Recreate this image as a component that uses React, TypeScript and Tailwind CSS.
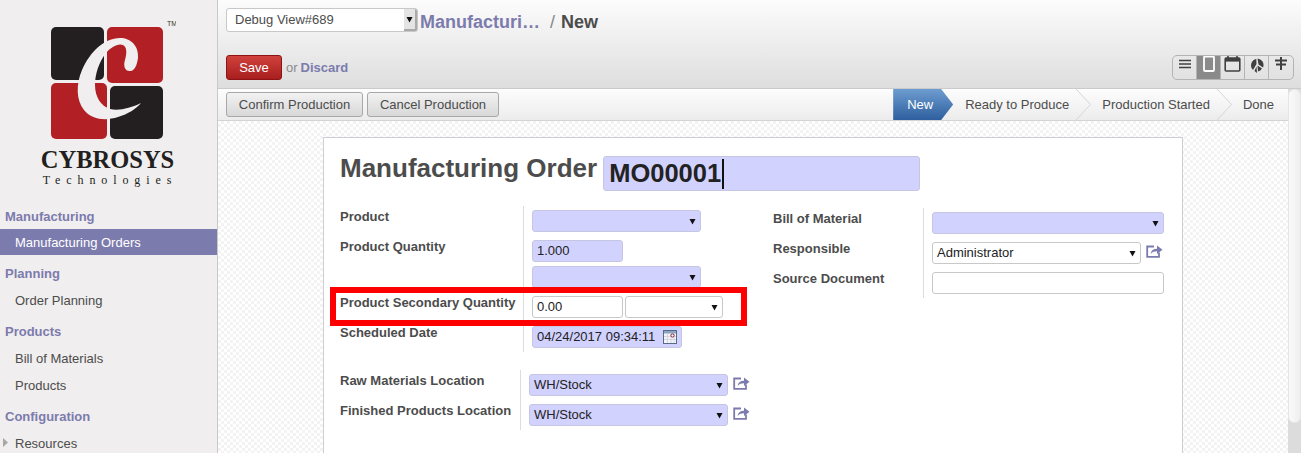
import React from "react";

const Tri = ({ className = "" }: { className?: string }) => (
  <svg width="7" height="7" viewBox="0 0 7 7" className={className}>
    <path d="M0.5 1H6.5L3.5 6.5Z" fill="#111" />
  </svg>
);

const Share = () => (
  <svg width="17" height="14" viewBox="0 0 17 14" className="shrink-0">
    <path d="M8 2.5H1.2V12.8H13V8.5" fill="none" stroke="#7c7bad" strokeWidth="1.8" />
    <path d="M4.5 10C5 6.5 7.5 4.8 11 4.8V1.5L16.5 5.8L11 10V7.3C8.5 7.3 6.2 8 4.5 10Z" fill="#7c7bad" />
  </svg>
);

const CalIcon = () => (
  <svg width="14" height="14" viewBox="0 0 14 14" className="shrink-0">
    <rect x="0.5" y="0.5" width="13" height="13" fill="#f4f4fa" stroke="#5a6a8a" />
    <rect x="1" y="1" width="12" height="2.5" fill="#8fa3c4" />
    <path d="M1 6.5H13M1 9.5H13M4.5 4V13M8 4V13M11 4V13" stroke="#c9d0dc" strokeWidth="0.8" />
    <circle cx="9.5" cy="5.5" r="1.6" fill="#fff" stroke="#8a1f2b" strokeWidth="1" />
  </svg>
);

const Field = ({
  w,
  req,
  select,
  text,
  children,
}: {
  w: string;
  req?: boolean;
  select?: boolean;
  text?: string;
  children?: React.ReactNode;
}) => (
  <div
    className={`${w} flex h-[22px] items-center justify-between rounded-[3px] border pl-[4px] pr-[4px] text-[13px] text-[#222] ${
      req ? "border-[#c6c6e2] bg-[#d2d2ff]" : "border-[#c8c8c8] bg-white"
    }`}
  >
    <span>{text}</span>
    {select && <Tri />}
    {children}
  </div>
);

const Label = ({ children, w }: { children?: React.ReactNode; w: string }) => (
  <div className={`${w} shrink-0 pt-[3px] text-[13px] font-bold leading-[15px] text-[#4c4c4c]`}>{children}</div>
);

const Row = ({
  label,
  labelW,
  h = "h-[30px]",
  children,
}: {
  label?: string;
  labelW: string;
  h?: string;
  children: React.ReactNode;
}) => (
  <div className={`flex ${h}`}>
    <Label w={labelW}>{label}</Label>
    <div className="flex flex-1 gap-[2px] border-l border-[#dcdcdc] pl-[8px] pt-[4px]">{children}</div>
  </div>
);

const Header = ({ children }: { children: React.ReactNode }) => (
  <div className="flex h-[25px] items-center pl-[5px] text-[13px] font-bold text-[#7c7bad]">{children}</div>
);

const Item = ({ children, active }: { children: React.ReactNode; active?: boolean }) => (
  <div
    className={`flex items-center pl-[15px] text-[13px] ${
      active ? "h-[26px] bg-[#7c7bad] pt-[1px] text-white" : "h-[27px] pt-[2px] text-[#4c4c4c]"
    }`}
  >
    {children}
  </div>
);

const Chevron = () => (
  <svg width="15" height="31" viewBox="0 0 15 31" className="shrink-0">
    <path d="M0 0L14.5 15.5L0 31" fill="none" stroke="#d4d4d4" strokeWidth="1" />
  </svg>
);

const Logo = () => (
  <svg width="125" height="120" viewBox="51 20 125 120" className="block">
    <rect x="51" y="27" width="53" height="53" rx="5" fill="#231f20" />
    <rect x="107" y="27" width="56" height="56" rx="5" fill="#b22025" />
    <rect x="51" y="83" width="56" height="56" rx="5" fill="#b22025" />
    <rect x="110" y="86" width="53" height="53" rx="5" fill="#231f20" />
    <path
      d="M138 58C139 46 131 38 120 38C104 38 90 52 82 70C76 84 76 100 84 110C92 120 106 121 118 117C128 114 136 109 141 103C131 108 119 111 110 109C101 106 95 97 95 85C95 74 99 62 106 53C111 47 118 43 123 45C127 47 127 53 125 60C123 66 125 72 131 71C135 70 137 65 138 58Z"
      fill="#f0eeee"
    />
    <text x="167" y="26" fontSize="7" fill="#333" fontFamily="Liberation Sans">
      TM
    </text>
  </svg>
);

const ViewBtn = ({ children, active, last }: { children: React.ReactNode; active?: boolean; last?: boolean }) => (
  <div
    className={`flex w-[24px] items-start justify-center ${last ? "" : "border-r border-[#b4b4b4]"} ${
      active ? "bg-[#8a8a8a]" : ""
    }`}
  >
    {children}
  </div>
);

export default function App() {
  return (
    <div className="flex h-[453px] w-full overflow-hidden bg-white font-['Liberation_Sans',sans-serif]">
      {/* Sidebar */}
      <aside className="w-[218px] shrink-0 border-r border-[#c8c8c8] bg-[#f0eeee]">
        <div className="h-[204px]">
          <div className="pl-[51px] pt-[20px]">
            <Logo />
          </div>
          <div className="mt-[7px] pr-[2px] text-center font-['Liberation_Serif',serif] text-[24.5px] font-bold leading-[26px] text-[#231f20]">
            CYBROSYS
          </div>
          <div className="mt-[1px] pl-[5px] pr-[2px] text-center font-['Liberation_Serif',serif] text-[12px] leading-[13px] tracking-[5.9px] text-[#231f20]">
            Technologies
          </div>
        </div>
        <Header>Manufacturing</Header>
        <Item active>Manufacturing Orders</Item>
        <div className="mt-[6px]">
          <Header>Planning</Header>
          <Item>Order Planning</Item>
        </div>
        <div className="mt-[6px]">
          <Header>Products</Header>
          <Item>Bill of Materials</Item>
          <Item>Products</Item>
        </div>
        <div className="mt-[6px]">
          <Header>Configuration</Header>
          <div className="relative">
            <Item>Resources</Item>
            <svg width="5" height="9" viewBox="0 0 5 9" className="absolute left-[3px] top-[9px]">
              <path d="M0 0L5 4.5L0 9Z" fill="#a8a8a8" />
            </svg>
          </div>
        </div>
      </aside>

      {/* Main */}
      <div className="flex min-w-0 flex-1 flex-col">
        <header className="h-[89px] shrink-0 border-b border-[#cacaca] bg-gradient-to-b from-[#fcfcfc] to-[#dedede] pl-[8px] pr-[7px] pt-[8px]">
          <div className="flex h-[24px] items-center">
            <div className="flex h-[24px] w-[192px] items-center justify-between overflow-hidden rounded-[3px] border border-[#c8c8c8] bg-white pl-[8px] text-[13px] text-[#4c4c4c]">
              <span>Debug View#689</span>
              <div className="flex h-full w-[13px] items-center justify-center border-b-2 border-r-2 border-[#aaa] bg-[#e4e4e4]">
                <Tri />
              </div>
            </div>
            <span className="ml-[2px] translate-y-[2px] text-[18px] font-bold text-[#7c7bad]">Manufacturi…</span>
            <span className="ml-[10px] translate-y-[2px] text-[18px] text-[#888]">/</span>
            <span className="ml-[6px] translate-y-[2px] text-[18px] font-bold text-[#4c4c4c]">New</span>
          </div>
          <div className="mt-[23px] flex items-center justify-between">
            <div className="flex items-center text-[13px]">
              <button className="h-[25px] w-[56px] rounded-[3px] border border-[#8c1414] bg-gradient-to-b from-[#d0413c] to-[#a81e1e] text-[13px] text-white">
                Save
              </button>
              <span className="ml-[4px] text-[#8a8a8a]">or</span>
              <span className="ml-[3px] font-bold text-[#7c7bad]">Discard</span>
            </div>
            <div className="flex h-[25px] w-[122px] overflow-hidden rounded-[5px] border border-[#b4b4b4]">
              <ViewBtn>
                <svg width="14" height="18" viewBox="0 0 14 18">
                  <path d="M1 4.5H13M1 8H13M1 11.5H13" stroke="#404040" strokeWidth="1.7" />
                </svg>
              </ViewBtn>
              <ViewBtn active>
                <svg width="14" height="20" viewBox="0 0 14 20">
                  <rect x="2" y="0.5" width="10" height="14.5" rx="1" fill="#8a8a8a" stroke="#fff" strokeWidth="1.8" />
                </svg>
              </ViewBtn>
              <ViewBtn>
                <svg width="17" height="20" viewBox="0 0 17 20">
                  <rect x="1.2" y="2" width="14.6" height="13" rx="1" fill="none" stroke="#404040" strokeWidth="1.6" />
                  <rect x="1" y="2" width="15" height="3.6" fill="#404040" />
                  <path d="M4 0V2.5M13 0V2.5" stroke="#404040" strokeWidth="1.6" />
                </svg>
              </ViewBtn>
              <ViewBtn>
                <svg width="16" height="20" viewBox="0 0 16 20">
                  <path d="M8.5 2.5A6.5 6.5 0 0 1 14 11.5L9.5 8.5Z" fill="#404040" />
                  <path d="M7.3 3A6.5 6.5 0 0 0 4 14L7.5 8Z" fill="#404040" />
                  <path d="M8.5 9.5L13 12.5A6.5 6.5 0 0 1 9 15.5Z" fill="#404040" />
                  <path d="M5.5 15L7.5 10.5L8 17Z" fill="#404040" />
                </svg>
              </ViewBtn>
              <ViewBtn last>
                <svg width="14" height="20" viewBox="0 0 14 20">
                  <path d="M7 1V14" stroke="#404040" strokeWidth="2" />
                  <path d="M1 4.5H13M2 8.5H12" stroke="#404040" strokeWidth="2.2" />
                </svg>
              </ViewBtn>
            </div>
          </div>
        </header>

        <div className="flex min-h-0 flex-1">
          <div className="flex min-w-0 flex-1 flex-col">
            {/* Status bar */}
            <div className="flex h-[32px] shrink-0 items-start justify-between border-b border-[#d4d4d4] bg-gradient-to-b from-[#fdfdfd] to-[#ececec] pl-[8px]">
              <div className="flex gap-[4px] pt-[3px]">
                <button className="h-[25px] w-[137px] rounded-[3px] border border-[#a8a8a8] bg-gradient-to-b from-[#f2f2f2] to-[#d8d8d8] text-[13px] text-[#4c4c4c]">
                  Confirm Production
                </button>
                <button className="h-[25px] w-[132px] rounded-[3px] border border-[#a8a8a8] bg-gradient-to-b from-[#f2f2f2] to-[#d8d8d8] text-[13px] text-[#4c4c4c]">
                  Cancel Production
                </button>
              </div>
              <div className="flex h-[31px] items-center text-[13px] text-[#4c4c4c]">
                <div className="flex h-[31px] w-[60px] items-center bg-gradient-to-b from-[#6d9dd0] to-[#2f5f9e] pl-[14px] text-white [clip-path:polygon(0_0,80%_0,100%_50%,80%_100%,0_100%)]">
                  New
                </div>
                <span className="ml-[12px] mr-[7px]">Ready to Produce</span>
                <Chevron />
                <span className="ml-[11px] mr-[7px]">Production Started</span>
                <Chevron />
                <span className="ml-[11px] mr-[14px]">Done</span>
              </div>
            </div>

            {/* Content */}
            <div className="min-h-0 flex-1 overflow-hidden bg-[repeating-conic-gradient(#f3f3f3_0%_25%,#ffffff_0%_50%)] bg-[length:6px_6px] pl-[105px] pt-[16px]">
              <div className="relative h-[400px] w-[860px] border border-[#cdcdd6] bg-white pl-[16px] pt-[18px]">
                <div className="flex h-[35px] items-start gap-[6px]">
                  <h1 className="text-[26px] font-bold leading-[24px] text-[#4c4c4c]">Manufacturing Order</h1>
                  <div className="flex h-[35px] w-[317px] items-center rounded-[3px] border border-[#c6c6e2] bg-[#d2d2ff] pl-[5px] text-[25.5px] font-bold text-[#222]">
                    <span>MO00001</span>
                    <span className="ml-[1px] h-[30px] w-[2px] bg-[#111]" />
                  </div>
                </div>

                <div className="mt-[15px] flex">
                  <div className="w-[433px] shrink-0">
                    <Row label="Product" labelW="w-[183px]">
                      <Field w="w-[169px]" req select />
                    </Row>
                    <Row label="Product Quantity" labelW="w-[183px]" h="h-[26px]">
                      <Field w="w-[91px]" req text="1.000" />
                    </Row>
                    <Row labelW="w-[183px]">
                      <Field w="w-[169px]" req select />
                    </Row>
                    <Row label="Product Secondary Quantity" labelW="w-[183px]">
                      <Field w="w-[91px]" text="0.00" />
                      <Field w="w-[98px]" select />
                    </Row>
                    <Row label="Scheduled Date" labelW="w-[183px]">
                      <Field w="w-[150px]" req text="04/24/2017 09:34:11">
                        <CalIcon />
                      </Field>
                    </Row>
                    <div className="mt-[18px]">
                      <Row label="Raw Materials Location" labelW="w-[180px]">
                        <div className="flex items-start gap-[5px]">
                          <Field w="w-[199px]" req select text="WH/Stock" />
                          <div className="pt-[2px]">
                            <Share />
                          </div>
                        </div>
                      </Row>
                      <Row label="Finished Products Location" labelW="w-[180px]">
                        <div className="flex items-start gap-[5px]">
                          <Field w="w-[199px]" req select text="WH/Stock" />
                          <div className="pt-[2px]">
                            <Share />
                          </div>
                        </div>
                      </Row>
                    </div>
                  </div>
                  <div className="mt-[2px] w-[391px]">
                    <Row label="Bill of Material" labelW="w-[150px]">
                      <Field w="w-[232px]" req select />
                    </Row>
                    <Row label="Responsible" labelW="w-[150px]">
                      <div className="flex items-start gap-[5px]">
                        <Field w="w-[209px]" select text="Administrator" />
                        <div className="pt-[2px]">
                          <Share />
                        </div>
                      </div>
                    </Row>
                    <Row label="Source Document" labelW="w-[150px]">
                      <Field w="w-[232px]" />
                    </Row>
                  </div>
                </div>

                {/* red annotation */}
                <div className="absolute left-[6px] top-[149px] h-[39px] w-[417px] border-[6px] border-[#ff0000]" />
              </div>
            </div>
          </div>

          {/* Scrollbar */}
          <div className="h-full w-[13px] shrink-0 bg-[#dcdcdc]">
            <div className="h-[334px] rounded-[6px] border border-[#e6e6e6] bg-gradient-to-r from-[#fafafa] to-[#efefef]" />
          </div>
        </div>
      </div>
    </div>
  );
}
